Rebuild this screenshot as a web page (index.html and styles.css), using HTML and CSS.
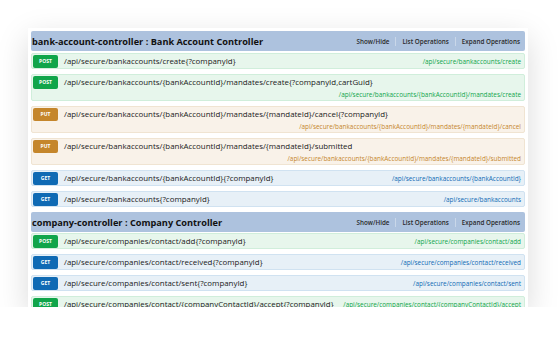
FILE: index.html
```html
<!DOCTYPE html>
<html>
<head>
<meta charset="utf-8">
<link rel="stylesheet" href="styles.css">
</head>
<body>
<div class="card">
  <div class="resource">
    <div class="heading">
      <h2>bank-account-controller : Bank Account Controller</h2>
      <ul class="links">
        <li>Show/Hide</li>
        <li>List Operations</li>
        <li>Expand Operations</li>
      </ul>
    </div>
    <div class="op post"><span class="method">POST</span><span class="path">/api/secure/bankaccounts/create{?companyId}</span><span class="summary">/api/secure/bankaccounts/create</span></div>
    <div class="op post"><span class="method">POST</span><span class="path">/api/secure/bankaccounts/{bankAccountId}/mandates/create{?companyId,cartGuid}</span><span class="summary">/api/secure/bankaccounts/{bankAccountId}/mandates/create</span></div>
    <div class="op put"><span class="method">PUT</span><span class="path">/api/secure/bankaccounts/{bankAccountId}/mandates/{mandateId}/cancel{?companyId}</span><span class="summary">/api/secure/bankaccounts/{bankAccountId}/mandates/{mandateId}/cancel</span></div>
    <div class="op put"><span class="method">PUT</span><span class="path">/api/secure/bankaccounts/{bankAccountId}/mandates/{mandateId}/submitted</span><span class="summary">/api/secure/bankaccounts/{bankAccountId}/mandates/{mandateId}/submitted</span></div>
    <div class="op get"><span class="method">GET</span><span class="path">/api/secure/bankaccounts/{bankAccountId}{?companyId}</span><span class="summary">/api/secure/bankaccounts/{bankAccountId}</span></div>
    <div class="op get"><span class="method">GET</span><span class="path">/api/secure/bankaccounts{?companyId}</span><span class="summary">/api/secure/bankaccounts</span></div>
  </div>
  <div class="resource">
    <div class="heading">
      <h2>company-controller : Company Controller</h2>
      <ul class="links">
        <li>Show/Hide</li>
        <li>List Operations</li>
        <li>Expand Operations</li>
      </ul>
    </div>
    <div class="op post"><span class="method">POST</span><span class="path">/api/secure/companies/contact/add{?companyId}</span><span class="summary">/api/secure/companies/contact/add</span></div>
    <div class="op get"><span class="method">GET</span><span class="path">/api/secure/companies/contact/received{?companyId}</span><span class="summary">/api/secure/companies/contact/received</span></div>
    <div class="op get"><span class="method">GET</span><span class="path">/api/secure/companies/contact/sent{?companyId}</span><span class="summary">/api/secure/companies/contact/sent</span></div>
    <div class="op post"><span class="method">POST</span><span class="path">/api/secure/companies/contact/{companyContactId}/accept{?companyId}</span><span class="summary">/api/secure/companies/contact/{companyContactId}/accept</span></div>
  </div>
</div>
</body>
</html>
```
FILE: styles.css
```css
html, body {
  margin: 0;
  padding: 0;
  background: #ffffff;
}
body {
  padding: 28px 0 0 28px;
  font-family: "Open Sans", "Noto Sans", sans-serif;
  color: #222;
}
.card {
  box-sizing: border-box;
  width: 500px;
  height: 279px;
  padding: 3px 3px 0 3px;
  background: #fff;
  overflow: hidden;
  box-shadow: 0 10px 30px rgba(0, 0, 0, 0.15);
}
.resource {
  display: flex;
  flex-direction: column;
  gap: 5px;
  margin-bottom: 5px;
}
.heading {
  display: flex;
  align-items: center;
  justify-content: space-between;
  height: 20px;
  background: #adc2de;
  border-radius: 2px;
  margin-bottom: -3px;
}
.resource + .resource .heading {
  margin-bottom: -4px;
}
.heading h2 {
  margin: 0 0 0 1px;
  font-size: 9.2px;
  font-weight: 700;
  color: #111;
}
.links {
  display: flex;
  list-style: none;
  margin: 0 5px 0 0;
  padding: 0;
  font-size: 6.3px;
  font-weight: 600;
  color: #2a2a2a;
}
.links li {
  padding: 0 6px;
  border-left: 1px solid rgba(255, 255, 255, 0.35);
  line-height: 9px;
}
.links li:first-child {
  border-left: none;
}
.links li:last-child {
  padding-right: 0;
}
.op {
  display: flex;
  flex-wrap: wrap;
  align-items: center;
  min-height: 14px;
  padding: 0 3px 0 1px;
  border: 1px solid;
  border-radius: 2px;
}
.method {
  width: 25px;
  height: 13px;
  line-height: 13px;
  text-align: center;
  font-size: 5px;
  font-weight: 700;
  color: #fff;
  border-radius: 2px;
  margin-right: 6px;
}
.path {
  font-size: 7.9px;
  color: #1a1a1a;
  line-height: 14px;
  margin-right: 4px;
}
.summary {
  margin-left: auto;
  font-size: 6.4px;
  line-height: 11px;
  white-space: nowrap;
}
.post { background: #e7f6ec; border-color: #d0eedb; }
.post .method { background: #10a54a; }
.post .summary { color: #10a54a; }
.put { background: #f9f2e9; border-color: #f0e4d2; }
.put .method { background: #c5862b; }
.put .summary { color: #c5862b; }
.get { background: #e7f0f7; border-color: #d0e2f1; }
.get .method { background: #0f6ab4; }
.get .summary { color: #0f6ab4; }
```
